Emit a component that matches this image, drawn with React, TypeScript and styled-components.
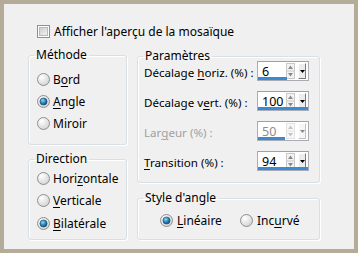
import React from 'react';
import styled, { createGlobalStyle } from 'styled-components';

const GlobalStyle = createGlobalStyle`
  html, body { margin: 0; padding: 0; background: #f0f0f0; }
  body {
    font-family: 'Noto Sans', 'Open Sans', sans-serif;
    font-size: 12px;
    color: #000;
  }
`;

const Frame = styled.div`
  width: 358px;
  height: 253px;
  box-sizing: border-box;
  border: 4px solid #b4ac99;
  background: #f0f0f0;
  padding: 21px 0 0 24px;
`;

const CheckRow = styled.label`
  display: flex;
  align-items: center;
  gap: 4px;
  height: 13px;
  margin-left: 9px;
  line-height: 13px;
  white-space: nowrap;
`;

const Columns = styled.div`
  display: grid;
  grid-template-columns: 99px 183px;
  column-gap: 10px;
  margin-top: 10px;
`;

const Column = styled.div<{ $gap: number; $offset?: number }>`
  display: flex;
  flex-direction: column;
  gap: ${p => p.$gap}px;
  margin-top: ${p => p.$offset || 0}px;
`;

const Group = styled.fieldset<{ $h: number }>`
  margin: 0;
  padding: 0;
  min-width: 0;
  height: ${p => p.$h}px;
  box-sizing: border-box;
  border: 1px solid #d8e0e5;
  border-radius: 3px;
  box-shadow: inset 1px 1px 0 #fff, 1px 1px 0 #fff;
`;

const Legend = styled.legend`
  margin-left: 5px;
  padding: 0 2px;
  line-height: 14px;
  font-size: 12px;
`;

const RadioList = styled.div<{ $top: number; $row: number }>`
  padding: ${p => p.$top}px 0 0 8px;
  display: flex;
  flex-direction: column;
  & > * { height: ${p => p.$row}px; }
`;

const RadioRow = styled.label<{ $w?: number }>`
  display: flex;
  align-items: center;
  gap: 3px;
  white-space: nowrap;
  ${p => (p.$w ? `width: ${p.$w}px;` : '')}
`;

const InlineRadios = styled.div`
  display: flex;
  padding: 4px 0 0 22px;
  height: 22px;
  & > label { gap: 4px; }
`;

const ParamList = styled.div`
  display: flex;
  flex-direction: column;
  gap: 10px;
  margin-top: -2px;
  padding: 0 10px 0 6px;
`;

const ParamRow = styled.div`
  display: grid;
  grid-template-columns: minmax(0, 1fr) 52px;
  align-items: center;
  height: 20px;
`;

const ParamLabel = styled.span<{ $disabled?: boolean }>`
  padding-top: 3px;
  white-space: nowrap;
  font-size: 11.6px;
  color: ${p => (p.$disabled ? '#a0a0a0' : '#000')};
`;

const Key = styled.u`
  text-underline-offset: 2px;
`;

const SpinBox = styled.div<{ $disabled?: boolean }>`
  position: relative;
  width: 52px;
  height: 20px;
  box-sizing: border-box;
  border: 1px solid #abadb3;
  border-top-color: #a0a0a0;
  background: #fff;
  display: flex;
  align-items: center;
  color: ${p => (p.$disabled ? '#8d8d8d' : '#000')};
`;

const SpinValue = styled.span`
  flex: 1;
  padding-left: 4px;
  padding-top: 1px;
  font-size: 12.5px;
`;

const SpinArrows = styled.span`
  display: block;
  width: 9px;
  height: 16px;
  margin-right: 3px;
`;

const DropButton = styled.span<{ $disabled?: boolean }>`
  display: flex;
  align-items: center;
  justify-content: center;
  width: 8px;
  height: 16px;
  margin-right: 2px;
  box-sizing: border-box;
  border-top: 1px solid #fff;
  border-left: 1px solid #fff;
  border-right: 1px solid #7a7a7a;
  border-bottom: 1px solid #7a7a7a;
  background: #ececec;
  opacity: ${p => (p.$disabled ? 0.45 : 1)};
`;

const ValueBar = styled.span`
  position: absolute;
  left: 0;
  bottom: 0;
  height: 3px;
  background: #3c8ad4;
`;

const RadioIcon = ({ checked }: { checked?: boolean }) => (
  <svg width="13" height="13" viewBox="0 0 13 13">
    <defs>
      <radialGradient id="rbg" cx="0.35" cy="0.3" r="0.8">
        <stop offset="0" stopColor="#ffffff" />
        <stop offset="1" stopColor="#cfcfcf" />
      </radialGradient>
      <radialGradient id="rdot" cx="0.4" cy="0.35" r="0.7">
        <stop offset="0" stopColor="#8fdcfb" />
        <stop offset="0.5" stopColor="#2b8ac0" />
        <stop offset="1" stopColor="#0c3f66" />
      </radialGradient>
    </defs>
    <circle cx="6.5" cy="6.5" r="6" fill="url(#rbg)" stroke="#8f8f8f" strokeWidth="1" />
    {checked && <circle cx="6.5" cy="6.5" r="3.6" fill="url(#rdot)" stroke="#1c4e70" strokeWidth="0.6" />}
  </svg>
);

const CheckIcon = () => (
  <svg width="13" height="13" viewBox="0 0 13 13">
    <defs>
      <linearGradient id="cbg" x1="0" y1="0" x2="1" y2="1">
        <stop offset="0" stopColor="#cbcbcb" />
        <stop offset="1" stopColor="#f4f4f4" />
      </linearGradient>
    </defs>
    <rect x="0.5" y="0.5" width="12" height="12" fill="#fff" stroke="#8e8f8f" />
    <rect x="2.5" y="2.5" width="8" height="8" fill="url(#cbg)" stroke="#b9b9b9" />
  </svg>
);

const Arrows = ({ disabled }: { disabled?: boolean }) => (
  <svg width="9" height="16" viewBox="0 0 9 16" style={{ opacity: disabled ? 0.5 : 1 }}>
    <rect x="0.5" y="0.5" width="8" height="15" fill="#f3f3f3" stroke="#c9c9c9" />
    <line x1="1" y1="8" x2="8" y2="8" stroke="#c9c9c9" />
    <path d="M4.5 2.5 L7 6 L2 6 Z" fill="#8a8a8a" />
    <path d="M2 10 L7 10 L4.5 13.5 Z" fill="#8a8a8a" />
  </svg>
);

const DropArrow = () => (
  <svg width="5" height="3" viewBox="0 0 5 3">
    <path d="M0 0 L5 0 L2.5 3 Z" fill="#000" />
  </svg>
);

const Spin = ({ value, bar, disabled }: { value: string; bar: number; disabled?: boolean }) => (
  <SpinBox $disabled={disabled}>
    <SpinValue>{value}</SpinValue>
    <SpinArrows>
      <Arrows disabled={disabled} />
    </SpinArrows>
    <DropButton $disabled={disabled}>
      <DropArrow />
    </DropButton>
    <ValueBar style={{ width: bar }} />
  </SpinBox>
);

export default function App() {
  return (
    <>
      <GlobalStyle />
      <Frame>
        <CheckRow>
          <CheckIcon />
          <span>Afficher l'aperçu de la mosaïque</span>
        </CheckRow>
        <Columns>
          <Column $gap={7}>
            <Group $h={97}>
              <Legend>Méthode</Legend>
              <RadioList $top={6} $row={22}>
                <RadioRow><RadioIcon /><span>B<Key>o</Key>rd</span></RadioRow>
                <RadioRow><RadioIcon checked /><span><Key>A</Key>ngle</span></RadioRow>
                <RadioRow><RadioIcon /><span>Miroir</span></RadioRow>
              </RadioList>
            </Group>
            <Group $h={88}>
              <Legend>Direction</Legend>
              <RadioList $top={1} $row={22.5}>
                <RadioRow><RadioIcon /><span>Hori<Key>z</Key>ontale</span></RadioRow>
                <RadioRow><RadioIcon /><span><Key>V</Key>erticale</span></RadioRow>
                <RadioRow><RadioIcon checked /><span><Key>B</Key>ilatérale</span></RadioRow>
              </RadioList>
            </Group>
          </Column>
          <Column $gap={8} $offset={1}>
            <Group $h={134}>
              <Legend>Paramètres</Legend>
              <ParamList>
                <ParamRow>
                  <ParamLabel>Décalage <Key>h</Key>oriz. (%) :</ParamLabel>
                  <Spin value="6" bar={29} />
                </ParamRow>
                <ParamRow>
                  <ParamLabel>Décalage v<Key>e</Key>rt. (%) :</ParamLabel>
                  <Spin value="100" bar={50} />
                </ParamRow>
                <ParamRow>
                  <ParamLabel $disabled>Lar<Key>g</Key>eur (%) :</ParamLabel>
                  <Spin value="50" bar={27} disabled />
                </ParamRow>
                <ParamRow>
                  <ParamLabel><Key>T</Key>ransition (%) :</ParamLabel>
                  <Spin value="94" bar={50} />
                </ParamRow>
              </ParamList>
            </Group>
            <Group $h={49}>
              <Legend>Style d'angle</Legend>
              <InlineRadios>
                <RadioRow $w={80}><RadioIcon checked /><span><Key>L</Key>inéaire</span></RadioRow>
                <RadioRow><RadioIcon /><span>Inc<Key>u</Key>rvé</span></RadioRow>
              </InlineRadios>
            </Group>
          </Column>
        </Columns>
      </Frame>
    </>
  );
}
